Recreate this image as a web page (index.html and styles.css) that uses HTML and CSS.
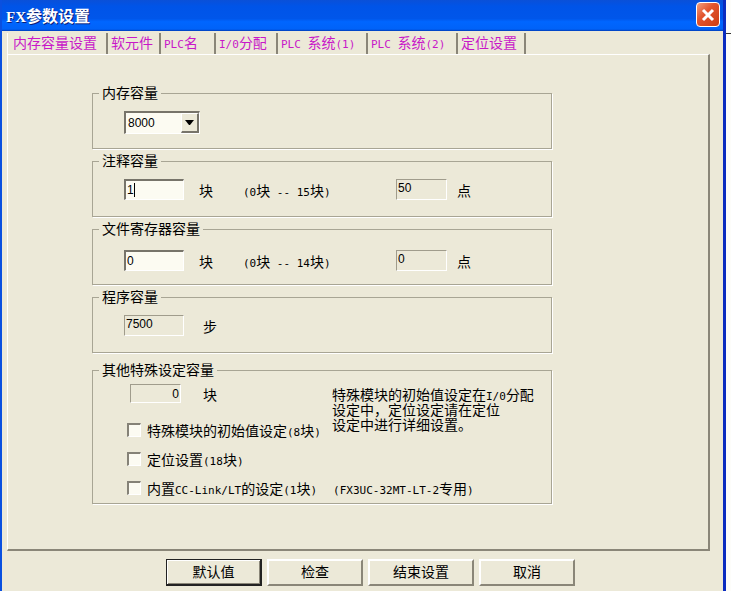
FILE: index.html
```html
<!DOCTYPE html>
<html lang="zh-CN">
<head>
  <meta charset="UTF-8" />
  <title>FX参数设置</title>
  <meta name="viewport" content="width=device-width, initial-scale=1.0" />
  <link rel="stylesheet" href="styles.css">
</head>
<body>
  <div class="window">
    <header class="titlebar">
      <h1><span class="en">FX</span>参数设置</h1>
      <button class="close" type="button" aria-label="关闭">
        <svg width="14" height="14" viewBox="0 0 14 14"><path d="M2 2L12 12M12 2L2 12" /></svg>
      </button>
    </header>

    <form class="content">
      <div class="tabs" role="tablist">
        <button type="button" role="tab" class="active" aria-selected="true">内存容量设置</button>
        <button type="button" role="tab">软元件</button>
        <button type="button" role="tab"><span class="en">PLC</span>名</button>
        <button type="button" role="tab"><span class="en">I/0</span>分配</button>
        <button type="button" role="tab"><span class="en">PLC </span>系统<span class="en">(1)</span></button>
        <button type="button" role="tab"><span class="en">PLC </span>系统<span class="en">(2)</span></button>
        <button type="button" role="tab">定位设置</button>
      </div>

      <div class="panel" role="tabpanel">
        <fieldset>
          <legend>内存容量</legend>
          <div class="row">
            <div class="combo">
              <select aria-label="内存容量">
                <option>8000</option>
              </select>
              <span class="arrow"><svg width="10" height="6" viewBox="0 0 10 6"><path d="M0 0H9L5 5H4Z" /></svg></span>
            </div>
          </div>
        </fieldset>

        <fieldset>
          <legend>注释容量</legend>
          <div class="row">
            <div class="field">
              <input type="text" id="comment" value="1" />
              <span class="caret"></span>
            </div>
            <label class="unit" for="comment">块</label>
            <span class="range"><span class="en">(0</span>块<span class="en"> -- 15</span>块<span class="en">)</span></span>
            <input type="text" id="commentPoints" class="readonly small" value="50" readonly />
            <label class="point" for="commentPoints">点</label>
          </div>
        </fieldset>

        <fieldset>
          <legend>文件寄存器容量</legend>
          <div class="row low">
            <div class="field">
              <input type="text" id="fileReg" value="0" />
            </div>
            <label class="unit" for="fileReg">块</label>
            <span class="range"><span class="en">(0</span>块<span class="en"> -- 14</span>块<span class="en">)</span></span>
            <input type="text" id="filePoints" class="readonly small" value="0" readonly />
            <label class="point" for="filePoints">点</label>
          </div>
        </fieldset>

        <fieldset>
          <legend>程序容量</legend>
          <div class="row">
            <div class="field">
              <input type="text" id="program" class="readonly" value="7500" readonly />
            </div>
            <label class="step" for="program">步</label>
          </div>
        </fieldset>

        <fieldset class="special">
          <legend>其他特殊设定容量</legend>
          <div class="special-grid">
            <div class="total">
              <input type="text" id="special" class="readonly small right" value="0" readonly />
              <label for="special">块</label>
            </div>
            <p class="note">特殊模块的初始值设定在<span class="en">I/0</span>分配<br>设定中，定位设定请在定位<br>设定中进行详细设置。</p>
            <label class="check"><input type="checkbox" /><span>特殊模块的初始值设定<span class="en">(8</span>块<span class="en">)</span></span></label>
            <label class="check"><input type="checkbox" /><span>定位设置<span class="en">(18</span>块<span class="en">)</span></span></label>
            <label class="check wide"><input type="checkbox" /><span>内置<span class="en">CC-Link/LT</span>的设定<span class="en">(1</span>块<span class="en">)</span></span><span class="model"><span class="en">(FX3UC-32MT-LT-2</span>专用<span class="en">)</span></span></label>
          </div>
        </fieldset>
      </div>

      <div class="buttons">
        <button type="button" class="default">默认值</button>
        <button type="button">检查</button>
        <button type="button">结束设置</button>
        <button type="button">取消</button>
      </div>
    </form>
  </div>
  <div class="desktop"></div>
</body>
</html>
```

FILE: styles.css
```css
* {
  box-sizing: border-box;
}
body {
  margin: 0;
  display: flex;
  min-height: 100vh;
  background: #fdfdfa;
  color: #000;
  font: 14px/16px "Noto Sans CJK SC", sans-serif;
}
button, input, select {
  margin: 0;
  font: inherit;
  color: inherit;
}
.en {
  font-family: "DejaVu Sans Mono", monospace;
  font-size: 11px;
  line-height: 1px;
  white-space: pre;
}

/* window frame */
.window {
  flex: 1;
  display: flex;
  flex-direction: column;
  background: #ece9d8;
  border-left: 2px solid #0a50e0;
  border-right: 3px solid #0a2cc0;
}
.desktop {
  width: 5px;
  height: 34px;
  border-bottom: 1px solid #333;
}
.titlebar {
  display: flex;
  align-items: center;
  justify-content: space-between;
  height: 31px;
  padding: 0 3px 2px 4px;
  background: linear-gradient(#0a50d8, #0054e8 20%, #0056ea 60%, #0066ff 70%, #0062f8 94%, #003cb8);
}
.titlebar h1 {
  margin: 0;
  color: #fff;
  font-size: 16px;
  font-weight: bold;
  text-shadow: 1px 1px #0a1e78;
}
.titlebar .en {
  font-family: "Liberation Serif", serif;
  font-size: 15px;
}
.close {
  display: flex;
  align-items: center;
  justify-content: center;
  width: 24px;
  height: 25px;
  padding: 0;
  border: 1px solid #fff;
  border-radius: 4px;
  background: linear-gradient(135deg, #f0a080, #e2552f 40%, #cc3c10);
}
.close path {
  stroke: #fff;
  stroke-width: 3;
}

/* tabs */
.content {
  flex: 1;
  padding: 2px 13px 0 5px;
}
.tabs {
  display: grid;
  grid-template-columns: 101px 53px 55px 62px 90px 90px 68px;
  height: 21px;
}
.tabs button {
  padding: 0 0 3px 3px;
  border: 0;
  border-right: 2px solid #8a8678;
  background: none;
  color: #c818c8;
  text-align: left;
  white-space: nowrap;
}
.tabs .active {
  padding-left: 5px;
  border-left: 1px solid #fff;
}
.panel {
  display: flex;
  flex-direction: column;
  gap: 4px;
  padding: 30px 156px 45px 84px;
  border: 1px solid #fff;
  border-right: 2px solid #8a8678;
  border-bottom: 2px solid #8a8678;
}

/* groups */
fieldset {
  min-width: 0;
  height: 64px;
  margin: 0;
  padding: 0;
  border: 1px solid #a8a594;
  box-shadow: 1px 1px #fff;
}
legend {
  height: 16px;
  margin-left: 6px;
  padding: 0 3px;
  line-height: 15px;
}
.row {
  display: flex;
  align-items: center;
  padding: 10px 0 0 31px;
}
.row.low {
  padding-top: 13px;
}
.field {
  position: relative;
  width: 60px;
}
input[type="text"] {
  display: block;
  width: 60px;
  height: 21px;
  padding: 0 1px;
  border: 1px solid #fff;
  border-top: 2px solid #77746a;
  border-left: 2px solid #77746a;
  border-radius: 0;
  background: #fcfbf2;
  font: 12px/16px "Liberation Sans", sans-serif;
}
input[type="text"].readonly {
  padding-bottom: 3px;
  border: 1px solid #fff;
  border-top-color: #a09c8c;
  border-left-color: #a09c8c;
  background: none;
}
input[type="text"].small {
  width: 51px;
}
input[type="text"].right {
  height: 19px;
  padding-bottom: 0;
  text-align: right;
}
/* text cursor, sits over the input */
.caret {
  position: absolute;
  left: 10px;
  top: 4px;
  width: 1px;
  height: 14px;
  background: #000;
}
.unit {
  width: 44px;
  margin-left: 15px;
}
.range {
  width: 153px;
}
.point {
  margin-left: 10px;
}
.step {
  margin-left: 19px;
}
.combo {
  position: relative;
  width: 76px;
  height: 23px;
}
.combo select {
  width: 100%;
  height: 100%;
  padding: 0 2px;
  border: 1px solid #fff;
  border-top: 2px solid #77746a;
  border-left: 2px solid #77746a;
  border-radius: 0;
  background: #fcfbf2;
  appearance: none;
  font: 12px/16px "Liberation Sans", sans-serif;
}
.combo .arrow {
  position: absolute;
  top: 2px;
  right: 1px;
  bottom: 1px;
  display: flex;
  align-items: center;
  justify-content: center;
  width: 18px;
  border: 1px solid #fff;
  border-right: 2px solid #77746a;
  border-bottom: 2px solid #77746a;
  background: #ece9d8;
  pointer-events: none;
}

/* special settings */
.special {
  height: 142px;
  margin-top: 5px;
}
.special-grid {
  display: grid;
  grid-template-columns: 205px 1fr;
  grid-template-rows: 31px 29px 29px 29px;
  padding: 6px 0 0 34px;
}
.total {
  display: flex;
  align-items: center;
  gap: 22px;
  height: 19px;
  padding-left: 3px;
}
.note {
  grid-column: 2;
  grid-row: 1 / 3;
  margin: 3px 0 0;
  line-height: 15px;
}
.check {
  grid-column: 1;
  display: flex;
  align-items: center;
  gap: 6px;
  white-space: nowrap;
}
.check.wide {
  grid-column: 1 / 3;
}
.check input {
  width: 14px;
  height: 14px;
  margin: 0;
  border: 1px solid #fff;
  border-top: 2px solid #858277;
  border-left: 2px solid #858277;
  background: #fcfbf2;
  appearance: none;
}
.model {
  margin-left: 10px;
}

/* bottom buttons */
.buttons {
  display: grid;
  grid-template-columns: 96px 96px 106px 96px;
  gap: 5px;
  padding: 8px 0 0 159px;
}
.buttons button {
  height: 27px;
  padding: 0 0 3px;
  border: 2px solid #fff;
  border-right-color: #8a8678;
  border-bottom-color: #8a8678;
  background: #ece9d8;
}
.buttons .default {
  border: 1px solid #222;
  border-right: 2px solid #222;
  border-bottom: 2px solid #222;
  box-shadow: inset 1px 1px #fff, inset -1px -1px #8a8678;
}
```
